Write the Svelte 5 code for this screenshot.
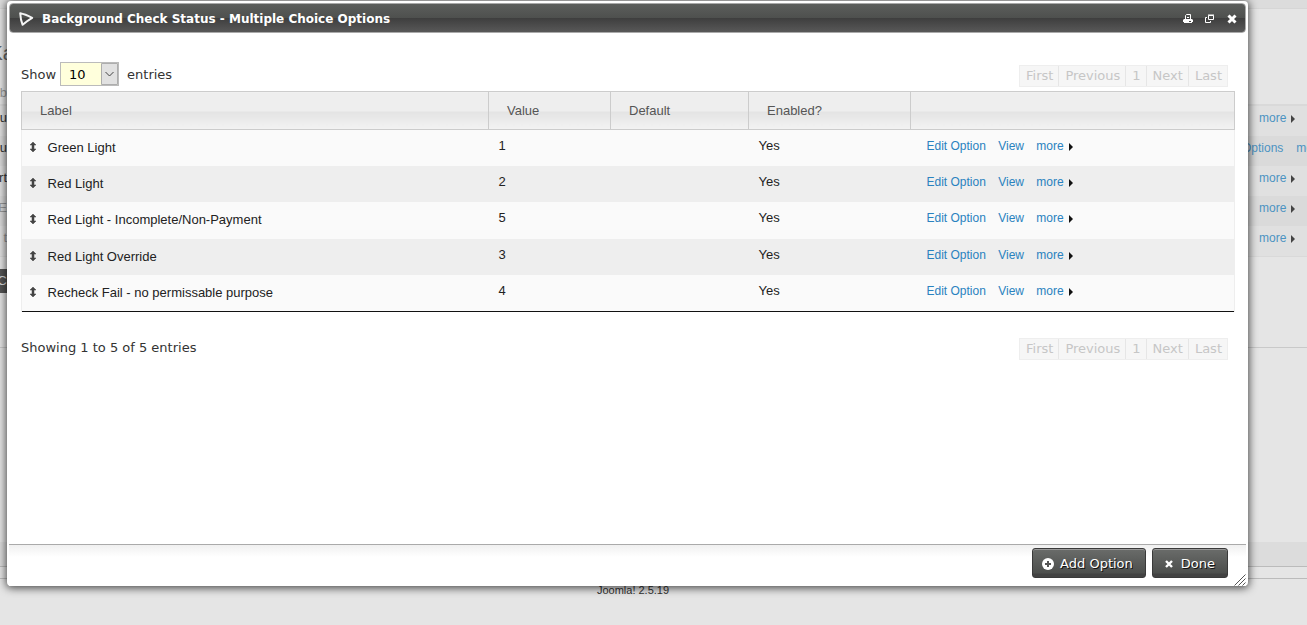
<script>
	const options = [
		{ label: 'Green Light', value: 1 },
		{ label: 'Red Light', value: 2 },
		{ label: 'Red Light - Incomplete/Non-Payment', value: 5 },
		{ label: 'Red Light Override', value: 3 },
		{ label: 'Recheck Fail - no permissable purpose', value: 4 }
	];
	const pages = ['First', 'Previous', '1', 'Next', 'Last'];

	// list on the page behind the dialog
	const fields = [
		{ name: 'u', links: [] },
		{ name: 'u', links: ['Options'] },
		{ name: 'rt', links: [] },
		{ name: 'E', links: [], off: true },
		{ name: 't', links: [], off: true }
	];

	let pageSize = $state('10');
</script>

{#snippet pager()}
	<div class="pager">
		{#each pages as page}
			<button type="button" disabled>{page}</button>
		{/each}
	</div>
{/snippet}

{#snippet more()}
	<a href="#more">more<svg width="4" height="8" viewBox="0 0 4 8"><path d="M0 0l4 4-4 4z" fill="currentColor" /></svg></a>
{/snippet}

<div class="page">
	<div class="topbar"></div>
	<div class="intro">
		<h1 class="peek">Ka</h1>
		<div class="peek faded">b</div>
	</div>
	<div class="fields">
		{#each fields as field}
			<div class="field">
				<span class="peek" class:faded={field.off}>{field.name}</span>
				<span class="links" class:wide={field.links.length > 0}>
					{#each field.links as link}
						<a href="#field">{link}</a>
					{/each}
					{@render more()}
				</span>
			</div>
		{/each}
	</div>
	<div class="lower">
		<span class="peek save">C</span>
	</div>
	<div class="blank"></div>
	<div class="band"></div>
	<div class="strip"></div>
	<footer>Joomla! 2.5.19</footer>
</div>

<div class="dialog" role="dialog" aria-labelledby="title">
	<div class="titlebar">
		<svg width="16" height="16" viewBox="0 0 16 16">
			<path d="M2.2 2.3Q7 3.2 14.2 6.8Q9.5 9.5 4.6 13.8Q2.6 9 2.2 2.3z" fill="none" stroke="#f4f4f4" stroke-width="2" stroke-linejoin="round" />
		</svg>
		<h2 id="title">Background Check Status - Multiple Choice Options</h2>
		<button type="button" aria-label="Print">
			<svg width="10" height="10" viewBox="0 0 10 10">
				<path d="M2.5 5V1.5l1-1h4V5M4 3.5h2" fill="none" stroke="#fff" />
				<path d="M1 5h8l1 1v2H0V6zM1 8h8v1H1z" fill="#fff" />
				<path d="M6 7.5h2" stroke="#444" />
			</svg>
		</button>
		<button type="button" aria-label="Maximize">
			<svg width="10" height="10" viewBox="0 0 10 10">
				<path d="M3.5 1.5h5v4h-5zM3 1h6M2 3.5H.5v5h5V7" fill="none" stroke="#fff" />
			</svg>
		</button>
		<button type="button" aria-label="Close">
			<svg width="10" height="10" viewBox="0 0 10 10">
				<path d="M1.5 1.5l7 7M8.5 1.5l-7 7" stroke="#fff" stroke-width="3" />
			</svg>
		</button>
	</div>

	<div class="content">
		<div class="tools">
			<label for="size">Show</label>
			<span class="select">
				<select id="size" bind:value={pageSize}>
					<option>10</option>
					<option>25</option>
					<option>50</option>
				</select>
				<svg width="17" height="22" viewBox="0 0 17 22">
					<path d="M.5.5h16v21H.5z" fill="#e1e1e1" stroke="#adadad" />
					<path d="M4.5 9l4 4 4-4" fill="none" stroke="#444" />
				</svg>
			</span>
			<span>entries</span>
			{@render pager()}
		</div>

		<table>
			<thead>
				<tr>
					<th class="label">Label</th>
					<th class="value">Value</th>
					<th class="default">Default</th>
					<th class="enabled">Enabled?</th>
					<th></th>
				</tr>
			</thead>
			<tbody>
				{#each options as option}
					<tr>
						<td class="name">
							<svg width="8" height="10" viewBox="0 0 8 10">
								<path d="M4 0l3 3H5v4h2l-3 3-3-3h2V3H1z" fill="#444" stroke="#444" stroke-width=".5" />
							</svg>
							{option.label}
						</td>
						<td>{option.value}</td>
						<td></td>
						<td>Yes</td>
						<td class="actions">
							<a href="#edit">Edit Option</a>
							<a href="#view">View</a>
							{@render more()}
						</td>
					</tr>
				{/each}
			</tbody>
		</table>

		<div class="summary">
			<span>Showing 1 to 5 of 5 entries</span>
			{@render pager()}
		</div>
	</div>

	<div class="buttons">
		<button type="button">
			<svg width="12" height="12" viewBox="0 0 12 12">
				<circle cx="6" cy="6" r="6" fill="#fff" />
				<path d="M6 3v6M3 6h6" stroke="#555" stroke-width="2" />
			</svg>
			Add Option
		</button>
		<button type="button" class="done">
			<svg width="8" height="8" viewBox="0 0 8 8">
				<path d="M1 1l6 6M7 1L1 7" stroke="#fff" stroke-width="2.4" />
			</svg>
			Done
		</button>
		<svg class="grip" width="12" height="12" viewBox="0 0 12 12">
			<path d="M.5 11.5l11-11M4.5 11.5l7-7M8.5 11.5l3-3" stroke="#555" />
		</svg>
	</div>
</div>

<style>
	:global(body) {
		background: #e5e5e5;
		color: #333;
		font: 13px/20px 'DejaVu Sans', Verdana, sans-serif;
	}
	a {
		color: #2a82bf;
		text-decoration: none;
	}
	button {
		font: inherit;
		cursor: pointer;
	}

	.page {
		overflow: hidden;
		font-family: 'Liberation Sans', Arial, sans-serif;
	}
	.page a {
		color: #4c93c2;
	}
	.topbar {
		height: 8px;
		background: #dcdcdc;
		border-bottom: 1px solid #d6d6d6;
	}
	.intro {
		box-sizing: border-box;
		height: 95px;
		padding-top: 32px;
	}
	/* only the tail of these is left of the dialog */
	.peek {
		display: flex;
		justify-content: flex-end;
		width: 7px;
	}
	.peek.faded {
		color: #999;
	}
	h1 {
		margin: 0 0 18px;
		color: #666;
		font: 20px/24px 'Liberation Sans', Arial, sans-serif;
	}
	h1.peek {
		width: 14px;
	}
	.fields {
		border-top: 2px solid #d9d9d9;
		border-bottom: 1px solid #d9d9d9;
	}
	.field {
		display: flex;
		justify-content: space-between;
		height: 26px;
		padding-top: 4px;
		line-height: 16px;
		background: #e0e0e0;
	}
	.field:nth-child(even) {
		background: #dadada;
	}
	.links {
		display: flex;
		gap: 13px;
		width: 48px;
		font-size: 12px;
		white-space: nowrap;
	}
	.links.wide {
		width: 65px;
	}
	.page svg {
		color: #444;
	}
	.lower {
		box-sizing: border-box;
		height: 91px;
		padding-top: 12px;
		border-bottom: 1px solid #c9c9c9;
	}
	.save {
		height: 24px;
		background: #555;
		color: #ddd;
		line-height: 24px;
	}
	.blank {
		height: 194px;
	}
	.band {
		height: 24px;
		background: #dcdcdc;
		border-bottom: 1px solid #bbb;
	}
	.strip {
		height: 11px;
		border-bottom: 1px solid #bbb;
	}
	footer {
		padding: 5px 41px 0 0;
		font-size: 11px;
		line-height: 12px;
		text-align: center;
	}

	.dialog {
		position: absolute;
		inset: 1px 59px 39px 7px;
		box-sizing: border-box;
		display: flex;
		flex-direction: column;
		padding: 2px 2px 0;
		background: #fff;
		border-radius: 4px;
		box-shadow: 0 1px 9px 1px rgba(0, 0, 0, 0.7);
	}
	.titlebar {
		display: flex;
		align-items: center;
		box-sizing: border-box;
		height: 30px;
		padding: 1px 8px 0;
		border: 1px solid #aaa;
		border-radius: 4px;
		background: linear-gradient(#5c5e5c, #4e504e 50%, #3e3e3e 50%, #585858);
	}
	h2 {
		flex: 1;
		margin: 0 0 0 8px;
		color: #fff;
		font-size: 12px;
		line-height: 20px;
	}
	.titlebar button {
		display: flex;
		margin-left: 12px;
		padding: 0;
		border: 0;
		background: none;
	}
	.content {
		flex: 1;
		padding: 29px 11px 0 12px;
	}
	.tools {
		display: flex;
		align-items: center;
		height: 24px;
		margin-bottom: 5px;
	}
	.tools > label,
	.tools > span:not(.select) {
		padding-top: 2px;
	}
	.select {
		display: grid;
		align-items: center;
		margin: 0 8px 0 4px;
	}
	.select > * {
		grid-area: 1 / 1;
	}
	.select svg {
		justify-self: end;
		margin-right: 1px;
		pointer-events: none;
	}
	select {
		appearance: none;
		box-sizing: border-box;
		width: 59px;
		height: 24px;
		padding: 2px 8px 0;
		border: 1px solid #bbb;
		border-radius: 0;
		background: #ffffdc;
		color: #000;
		font: inherit;
	}
	.pager {
		display: flex;
		margin: 4px 7px 0 auto;
		border: 1px solid #eee;
	}
	.pager button {
		padding: 0 5px 0 6px;
		border: 0;
		border-left: 1px solid #e6e6e6;
		background: #f6f6f6;
		color: #c6c6c6;
	}
	.pager button:first-child {
		border-left: 0;
	}

	table {
		width: 100%;
		height: 221px;
		table-layout: fixed;
		border-collapse: collapse;
		border-bottom: 1px solid #111;
		font-family: 'Liberation Sans', Arial, sans-serif;
	}
	th {
		box-sizing: border-box;
		height: 38px;
		padding: 0 18px;
		border: 1px solid #ccc;
		background: linear-gradient(#eee 52%, #e3e3e3 52%, #f3f3f3);
		color: #555;
		font-size: 13px;
		font-weight: normal;
		text-align: left;
	}
	.label {
		width: 467px;
	}
	.value {
		width: 122px;
	}
	.default {
		width: 138px;
	}
	.enabled {
		width: 162px;
	}
	td {
		padding: 0 10px 4px;
		color: #222;
		font-size: 13px;
	}
	tbody tr {
		background: #fafafa;
		border-right: 1px solid #eee;
		border-left: 1px solid #eee;
	}
	tbody tr:nth-child(even) {
		background: #eee;
	}
	.name {
		padding: 0 7px;
	}
	.name svg {
		margin-right: 7px;
	}
	.actions {
		padding-left: 16px;
		font-size: 12px;
	}
	.actions a {
		margin-right: 9px;
	}
	.actions svg {
		color: #111;
	}
	a svg {
		margin-left: 5px;
		vertical-align: -1px;
	}
	.summary {
		display: flex;
		margin-top: 22px;
	}
	.summary span {
		margin-top: 4px;
	}

	.buttons {
		display: flex;
		justify-content: flex-end;
		gap: 6px;
		box-sizing: border-box;
		height: 42px;
		padding-top: 3px;
		border-top: 1px solid #aaa;
		background: linear-gradient(#f0f0f0, #fff 12px);
	}
	.buttons button {
		display: flex;
		align-items: center;
		gap: 6px;
		height: 30px;
		padding: 1px 12px 0 9px;
		border: 1px solid #3a3a3a;
		border-radius: 3px;
		background: linear-gradient(#6a6c6a, #4d4f4d 85%, #424242 90%);
		box-shadow: inset 0 1px #999;
		color: #fff;
		text-shadow: 1px 1px #111;
	}
	.buttons .done {
		gap: 8px;
		padding-left: 12px;
	}
	.grip {
		align-self: flex-end;
	}
</style>
